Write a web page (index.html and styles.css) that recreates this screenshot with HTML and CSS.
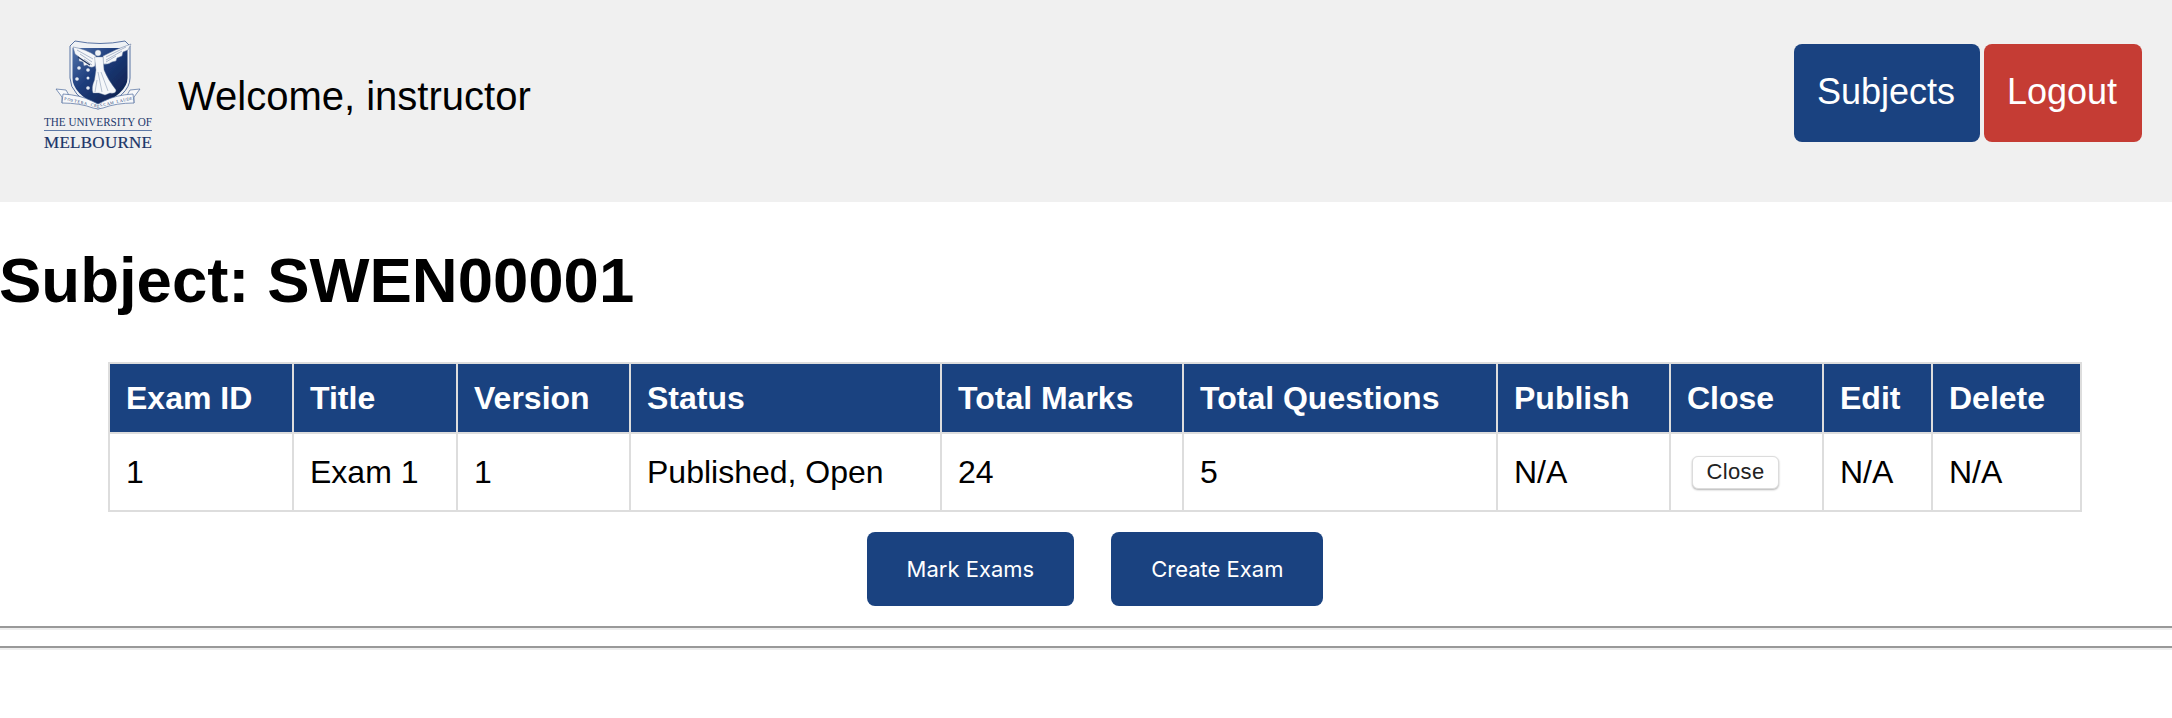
FILE: index.html
```html
<!DOCTYPE html>
<html lang="en">
<head>
<meta charset="utf-8">
<title>Subject: SWEN00001</title>
<link rel="stylesheet" href="styles.css">
</head>
<body>
<header class="topbar">
  <svg class="logo" viewBox="40 36 116 116" aria-label="The University of Melbourne">
    <defs>
      <linearGradient id="shieldFill" x1="0" y1="0" x2="1" y2="1">
        <stop offset="0" stop-color="#5273ab"/>
        <stop offset="0.4" stop-color="#1e3d7c"/>
        <stop offset="1" stop-color="#0a1b45"/>
      </linearGradient>
      <filter id="soft" x="-5%" y="-5%" width="110%" height="110%"><feGaussianBlur stdDeviation="0.3"/></filter>
    </defs>
    <g filter="url(#soft)">
      <path d="M70 46 L75 41 Q100 46 125 41 L130 46 L130 78 Q130 95 98 109 Q70 95 70 78 Z" fill="#eef1f5" stroke="#48659a" stroke-width="0.9"/>
      <path d="M72.500 48 L127.500 48 L127.500 78 Q127.500 93 98 106 Q72.500 93 72.500 78 Z" fill="url(#shieldFill)"/>
      <path d="M73 47 Q86 49 96 56 L95 66 Q91 69 87 65 L84 66 L83 62 L79 61 L79 57 L75 54 Z" fill="#f4f6f9" stroke="#5a7099" stroke-width="0.5"/>
      <path d="M131 44 Q116 49 103 56 L103 64 Q108 65 112 62 L116 61 L117 58 L122 56 L123 52 L128 50 Z" fill="#f4f6f9" stroke="#5a7099" stroke-width="0.5"/>
      <path d="M77 50 L93 59 M80 54 L92 62 M84 59 L92 65 M126 47 L106 57 M122 51 L106 60 M116 56 L106 62" stroke="#7a8dad" stroke-width="0.6" fill="none"/>
      <circle cx="98" cy="53" r="3" fill="#eef1f5" stroke="#7c8daa" stroke-width="0.4"/>
      <path d="M94.500 57 L103 57 L104 70 Q108 80 116 90 Q116 94 110 93 L105 95 L99 93 L93 93 Q91 88 94.500 80 L96 70 Z" fill="#f5f7fa" stroke="#72849f" stroke-width="0.4"/>
      <path d="M98 72 L102 92 M101 72 L108 91 M97 80 L95 92" stroke="#8c9cb6" stroke-width="0.6" fill="none"/>
      <path d="M78 57 L90 65" stroke="#22365f" stroke-width="1.300"/>
      <g fill="#e8edf5">
        <circle cx="79" cy="68" r="1.800"/>
        <circle cx="88" cy="70" r="1.800"/>
        <circle cx="77" cy="79" r="1.800"/>
        <circle cx="88" cy="78" r="1.500"/>
        <circle cx="88" cy="88" r="1.800"/>
      </g>
      <path d="M56 89 L66 90 L70 97 L62 103 L62 97 Z" fill="#f7f8fa" stroke="#4e6a9c" stroke-width="0.7"/>
      <path d="M140 89 L130 90 L126 97 L134 103 L134 97 Z" fill="#f7f8fa" stroke="#4e6a9c" stroke-width="0.7"/>
      <path d="M63 94 Q80 95 92 101 L98 104 L104 101 Q116 95 133 94 L134 103 Q116 103 103 108 L98 109 L93 108 Q80 103 62 103 Z" fill="#f7f8fa" stroke="#4e6a9c" stroke-width="0.7"/>
    </g>
    <text class="motto" x="64 67.300 70.600 73.900 77.200 80.500 83.800 87.100 90.400 93.700 97 100.300 103.600 106.900 110.200 113.500 116.800 120.100 123.400 126.700 130" y="100 100.760 101.520 102.280 103.040 103.800 104.560 105.320 106.080 106.840 107.600 106.840 106.080 105.320 104.560 103.800 103.040 102.280 101.520 100.760 100" rotate="11 11 11 11 11 11 11 11 11 11 0 -11 -11 -11 -11 -11 -11 -11 -11 -11 -11">POSTERA CRESCAM LAUDE</text>
    <text class="logo-line" x="44" y="126" textLength="108" lengthAdjust="spacingAndGlyphs">THE UNIVERSITY OF</text>
    <rect class="logo-rule" x="44" y="130" width="108" height="1"/>
    <text class="logo-name" x="44" y="148" textLength="108" lengthAdjust="spacing">MELBOURNE</text>
  </svg>
  <span class="welcome">Welcome, instructor</span>
  <nav class="topnav">
    <a class="navbtn navbtn-blue" href="#">Subjects</a>
    <a class="navbtn navbtn-red" href="#">Logout</a>
  </nav>
</header>
<main>
  <h1 class="subject">Subject: SWEN00001</h1>
  <section class="exams">
    <table class="exam-table">
      <colgroup>
        <col class="c-id"><col class="c-title"><col class="c-version"><col class="c-status"><col class="c-marks">
        <col class="c-questions"><col class="c-publish"><col class="c-close"><col class="c-edit"><col class="c-delete">
      </colgroup>
      <thead>
        <tr>
          <th>Exam ID</th><th>Title</th><th>Version</th><th>Status</th><th>Total Marks</th>
          <th>Total Questions</th><th>Publish</th><th>Close</th><th>Edit</th><th>Delete</th>
        </tr>
      </thead>
      <tbody>
        <tr>
          <td>1</td><td>Exam 1</td><td>1</td><td>Published, Open</td><td>24</td>
          <td>5</td><td>N/A</td><td><button class="closebtn" type="button">Close</button></td><td>N/A</td><td>N/A</td>
        </tr>
      </tbody>
    </table>
    <div class="actions">
      <button class="action" type="button">Mark Exams</button>
      <button class="action" type="button">Create Exam</button>
    </div>
  </section>
  <hr class="rule">
  <hr class="rule">
</main>
</body>
</html>
```
FILE: styles.css
```css
* { box-sizing: border-box; }
html, body { margin: 0; padding: 0; background: #fff; color: #000; font-family: "Liberation Sans", Arial, sans-serif; }
.topbar {
  display: flex;
  align-items: flex-start;
  height: 202px;
  padding: 36px 30px 0 40px;
  background: #f0f0f0;
}
.logo { width: 116px; height: 116px; flex: none; }
.motto { font: 4.2px "Liberation Serif", serif; fill: #2a4678; }
.logo-line { font: 13px "Liberation Serif", serif; fill: #1f3a6e; }
.logo-name { font: 17px "Liberation Serif", serif; fill: #1a3568; stroke: #1a3568; stroke-width: 0.2px; }
.logo-rule { fill: #5d78a6; }
.welcome { margin: 37px 0 0 22px; font-size: 40px; line-height: 46px; }
.topnav { display: flex; gap: 4px; margin: 8px 0 0 auto; }
.navbtn {
  display: flex;
  align-items: center;
  justify-content: center;
  height: 98px;
  padding: 0 2px 3px 0;
  border-radius: 8px;
  color: #fff;
  font-size: 36px;
  text-decoration: none;
}
.navbtn-blue { width: 186px; background: #1a4280; }
.navbtn-red { width: 158px; background: #c53c34; }
.subject { margin: 41px 0 0 -1px; font-size: 63.5px; line-height: 74px; font-weight: 700; }
.exams { width: 1974px; margin: 45px 0 0 108px; }
.exam-table { width: 1974px; table-layout: fixed; border-collapse: collapse; font-size: 32px; }
.c-id { width: 184px; } .c-title { width: 164px; } .c-version { width: 173px; } .c-status { width: 311px; }
.c-marks { width: 242px; } .c-questions { width: 314px; } .c-publish { width: 173px; } .c-close { width: 153px; }
.c-edit { width: 109px; } .c-delete { width: 149px; }
.exam-table th, .exam-table td { border: 2px solid #ddd; padding: 0 16px; text-align: left; }
.exam-table th { height: 70px; background: #1a4280; color: #fff; font-weight: 700; }
.exam-table td { height: 78px; }
.closebtn {
  display: block;
  width: 87px;
  height: 33px;
  margin-left: 5px;
  padding: 0;
  border: 1px solid #dcdcdc;
  border-radius: 6px;
  background: #fff;
  box-shadow: 0 1px 2px rgba(0, 0, 0, 0.3);
  color: #222;
  font: 22px "Liberation Sans", Arial, sans-serif;
  letter-spacing: 0.4px;
}
.actions { display: flex; justify-content: center; gap: 37px; margin-top: 20px; }
.action {
  height: 74px;
  padding: 0 40px;
  border: 0;
  border-radius: 8px;
  background: #1a4280;
  color: #fff;
  font: 22px Inter, "Liberation Sans", sans-serif;
}
.rule { height: 4px; margin: 20px 0 0; border: 0; border-top: 2px solid #999; border-bottom: 2px solid #eee; }
.rule + .rule { margin-top: 16px; }
```
